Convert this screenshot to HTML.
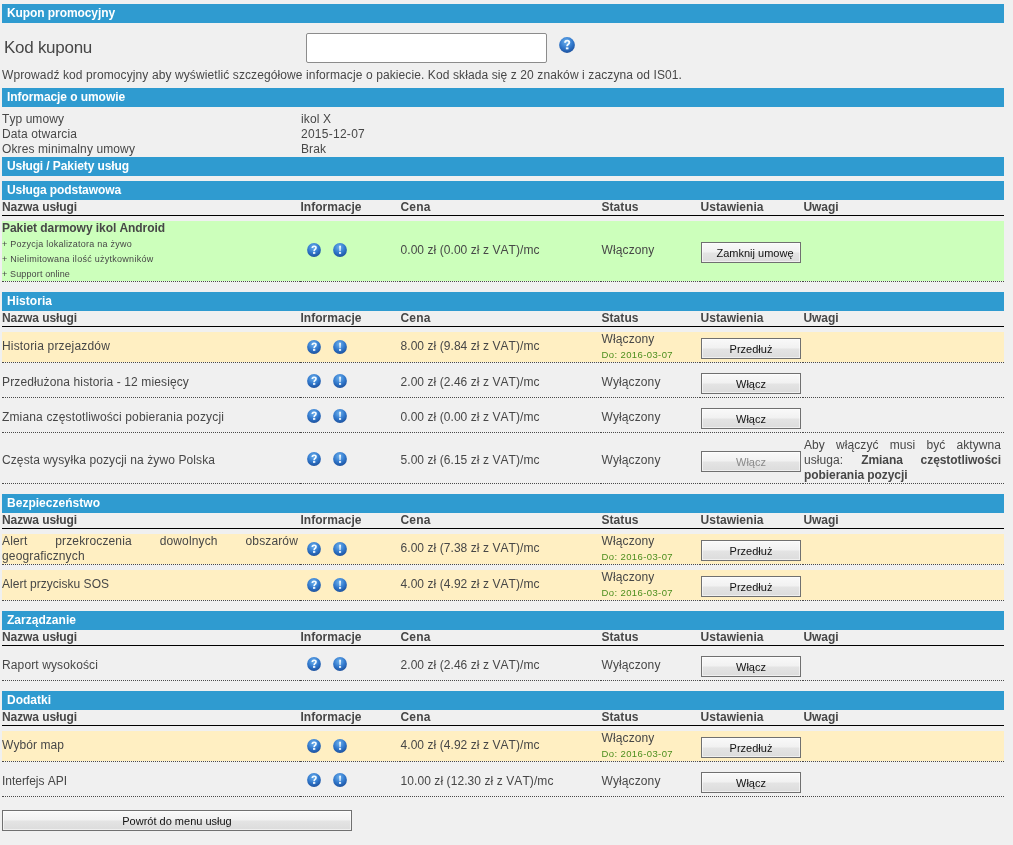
<!DOCTYPE html>
<html><head><meta charset="utf-8"><style>
html,body{margin:0;padding:0;}
body{font-kerning:none;width:1013px;height:845px;background:#f0f0f0;position:relative;overflow:hidden;font-family:"Liberation Sans",sans-serif;font-size:12px;color:#474747;}
div{position:absolute;white-space:nowrap;}
#w{left:0;top:0;width:1013px;height:845px;will-change:transform;}
.bar{left:2px;width:997px;height:19px;line-height:19px;padding-left:5px;background:#2f9bd0;color:#fff;font-weight:bold;}
.t{line-height:15px;}
.th{line-height:15px;font-weight:bold;}
.sm{line-height:15px;font-size:9px;}
.do{line-height:15px;font-size:9.5px;color:#4c8e1e;}
.big{font-size:17px;line-height:20px;}
.just{white-space:normal;text-align:justify;}
.hline{left:2px;width:1002px;height:1px;background:#000;}
.rowbg{left:2px;width:1002px;}
.dot{height:0;border-top:1px dotted #4a4a4a;}
.btn{height:18px;padding-top:1px;line-height:19px;border:1px solid #707070;text-align:center;color:#111;font-size:11px;background:linear-gradient(#f9f9f9 0%,#f1f1f1 48%,#e4e4e4 52%,#dcdcdc 100%);box-shadow:inset 0 0 0 1px rgba(255,255,255,0.55);}
.btn.dis{color:#8a8a8a;}
.inp{border:1px solid #8c8c8c;border-radius:2px;background:#fff;}
.ic{width:14px;height:14px;}
.big16{width:16px;height:16px;}
</style></head><body>
<div id="w">
<div class="bar" style="top:4px;letter-spacing:-0.083px;">Kupon promocyjny</div>
<div class="big" style="left:4px;top:38px;letter-spacing:-0.274px;">Kod kuponu</div>
<div class="inp" style="left:306px;top:33px;width:239px;height:28px"></div>
<div class="ic q big16" style="left:559px;top:37px"><svg width="100%" height="100%" viewBox="0 0 14 14"><defs><radialGradient id="g1" cx="0.45" cy="0.3" r="0.75"><stop offset="0" stop-color="#6eb2ee"/><stop offset="0.55" stop-color="#3178cc"/><stop offset="1" stop-color="#1a4c98"/></radialGradient></defs><circle cx="7" cy="7" r="6.9" fill="url(#g1)"/><path d="M5.3 5.1 Q5.3 3.2 7.2 3.2 Q9 3.2 9 4.8 Q9 5.9 7.9 6.5 Q7.1 7 7.1 8.2" fill="none" stroke="#f4fbff" stroke-width="1.65"/><rect x="6.0" y="9.1" width="2.3" height="1.7" fill="#f4fbff"/></svg></div>
<div class="t" style="left:2px;top:68px;letter-spacing:0.104px;">Wprowadź kod promocyjny aby wyświetlić szczegółowe informacje o pakiecie. Kod składa się z 20 znaków i zaczyna od IS01.</div>
<div class="bar" style="top:88px;letter-spacing:-0.071px;">Informacje o umowie</div>
<div class="t" style="left:2px;top:112px;letter-spacing:0.072px;">Typ umowy</div>
<div class="t" style="left:301px;top:112px;letter-spacing:0.109px;">ikol X</div>
<div class="t" style="left:2px;top:127px;letter-spacing:0.126px;">Data otwarcia</div>
<div class="t" style="left:301px;top:127px;letter-spacing:0.262px;">2015-12-07</div>
<div class="t" style="left:2px;top:142px;letter-spacing:0.110px;">Okres minimalny umowy</div>
<div class="t" style="left:301px;top:142px;letter-spacing:0.082px;">Brak</div>
<div class="bar" style="top:157px;letter-spacing:-0.092px;">Usługi / Pakiety usług</div>
<div class="bar" style="top:181px;letter-spacing:-0.079px;">Usługa podstawowa</div>
<div class="th" style="left:2px;top:200px;letter-spacing:-0.084px;">Nazwa usługi</div>
<div class="th" style="left:300.5px;top:200px;letter-spacing:0.031px;">Informacje</div>
<div class="th" style="left:400.5px;top:200px;letter-spacing:0.164px;">Cena</div>
<div class="th" style="left:601.5px;top:200px;letter-spacing:0.054px;">Status</div>
<div class="th" style="left:700.5px;top:200px;letter-spacing:0.031px;">Ustawienia</div>
<div class="th" style="left:803.5px;top:200px;letter-spacing:-0.068px;">Uwagi</div>
<div class="hline" style="top:215px"></div>
<div class="rowbg" style="top:221px;height:60px;background:#ccffbb"></div>
<div class="dot" style="top:281px;left:2px;width:298px"></div>
<div class="dot" style="top:281px;left:300px;width:100px"></div>
<div class="dot" style="top:281px;left:400px;width:201px"></div>
<div class="dot" style="top:281px;left:601px;width:99px"></div>
<div class="dot" style="top:281px;left:700px;width:103px"></div>
<div class="dot" style="top:281px;left:803px;width:201px"></div>
<div class="th" style="left:2px;top:221px;letter-spacing:-0.063px;">Pakiet darmowy ikol Android</div>
<div class="sm" style="left:2px;top:237px;letter-spacing:0.240px;">+ Pozycja lokalizatora na żywo</div>
<div class="sm" style="left:2px;top:252px;letter-spacing:0.270px;">+ Nielimitowana ilość użytkowników</div>
<div class="sm" style="left:2px;top:267px;letter-spacing:0.138px;">+ Support online</div>
<div class="ic q" style="left:307px;top:243px"><svg width="100%" height="100%" viewBox="0 0 14 14"><defs><radialGradient id="g1" cx="0.45" cy="0.3" r="0.75"><stop offset="0" stop-color="#6eb2ee"/><stop offset="0.55" stop-color="#3178cc"/><stop offset="1" stop-color="#1a4c98"/></radialGradient></defs><circle cx="7" cy="7" r="6.9" fill="url(#g1)"/><path d="M5.3 5.1 Q5.3 3.2 7.2 3.2 Q9 3.2 9 4.8 Q9 5.9 7.9 6.5 Q7.1 7 7.1 8.2" fill="none" stroke="#f4fbff" stroke-width="1.65"/><rect x="6.0" y="9.1" width="2.3" height="1.7" fill="#f4fbff"/></svg></div>
<div class="ic e" style="left:333px;top:243px"><svg width="100%" height="100%" viewBox="0 0 14 14"><circle cx="7" cy="7" r="6.9" fill="url(#g1)"/><path d="M6.15 2.8 L7.95 2.8 L7.55 8.3 L6.55 8.3 Z" fill="#f4fbff"/><rect x="6.0" y="9.1" width="2.1" height="1.7" fill="#f4fbff"/></svg></div>
<div class="t" style="left:400.5px;top:243px;letter-spacing:0.063px;">0.00 zł (0.00 zł z VAT)/mc</div>
<div class="t" style="left:601.5px;top:243px;letter-spacing:0.123px;">Włączony</div>
<div class="btn" style="left:701px;top:242px;width:98px"><span style="position:relative;left:4px">Zamknij umowę</span></div>
<div class="bar" style="top:292px;letter-spacing:0.040px;">Historia</div>
<div class="th" style="left:2px;top:311px;letter-spacing:-0.084px;">Nazwa usługi</div>
<div class="th" style="left:300.5px;top:311px;letter-spacing:0.031px;">Informacje</div>
<div class="th" style="left:400.5px;top:311px;letter-spacing:0.164px;">Cena</div>
<div class="th" style="left:601.5px;top:311px;letter-spacing:0.054px;">Status</div>
<div class="th" style="left:700.5px;top:311px;letter-spacing:0.031px;">Ustawienia</div>
<div class="th" style="left:803.5px;top:311px;letter-spacing:-0.068px;">Uwagi</div>
<div class="hline" style="top:326px"></div>
<div class="rowbg" style="top:332px;height:30px;background:#ffefc2"></div>
<div class="dot" style="top:362px;left:2px;width:298px"></div>
<div class="dot" style="top:362px;left:300px;width:100px"></div>
<div class="dot" style="top:362px;left:400px;width:201px"></div>
<div class="dot" style="top:362px;left:601px;width:99px"></div>
<div class="dot" style="top:362px;left:700px;width:103px"></div>
<div class="dot" style="top:362px;left:803px;width:201px"></div>
<div class="t" style="left:2px;top:339px;letter-spacing:0.173px;">Historia przejazdów</div>
<div class="ic q" style="left:307px;top:339.5px"><svg width="100%" height="100%" viewBox="0 0 14 14"><defs><radialGradient id="g1" cx="0.45" cy="0.3" r="0.75"><stop offset="0" stop-color="#6eb2ee"/><stop offset="0.55" stop-color="#3178cc"/><stop offset="1" stop-color="#1a4c98"/></radialGradient></defs><circle cx="7" cy="7" r="6.9" fill="url(#g1)"/><path d="M5.3 5.1 Q5.3 3.2 7.2 3.2 Q9 3.2 9 4.8 Q9 5.9 7.9 6.5 Q7.1 7 7.1 8.2" fill="none" stroke="#f4fbff" stroke-width="1.65"/><rect x="6.0" y="9.1" width="2.3" height="1.7" fill="#f4fbff"/></svg></div>
<div class="ic e" style="left:333px;top:339.5px"><svg width="100%" height="100%" viewBox="0 0 14 14"><circle cx="7" cy="7" r="6.9" fill="url(#g1)"/><path d="M6.15 2.8 L7.95 2.8 L7.55 8.3 L6.55 8.3 Z" fill="#f4fbff"/><rect x="6.0" y="9.1" width="2.1" height="1.7" fill="#f4fbff"/></svg></div>
<div class="t" style="left:400.5px;top:339px;letter-spacing:0.063px;">8.00 zł (9.84 zł z VAT)/mc</div>
<div class="t" style="left:601.5px;top:332px;letter-spacing:0.123px;">Włączony</div>
<div class="do" style="left:601.5px;top:347px;letter-spacing:0.393px;">Do: 2016-03-07</div>
<div class="btn" style="left:701px;top:338px;width:98px">Przedłuż</div>
<div class="dot" style="top:397px;left:2px;width:298px"></div>
<div class="dot" style="top:397px;left:300px;width:100px"></div>
<div class="dot" style="top:397px;left:400px;width:201px"></div>
<div class="dot" style="top:397px;left:601px;width:99px"></div>
<div class="dot" style="top:397px;left:700px;width:103px"></div>
<div class="dot" style="top:397px;left:803px;width:201px"></div>
<div class="t" style="left:2px;top:375px;letter-spacing:0.125px;">Przedłużona historia - 12 miesięcy</div>
<div class="ic q" style="left:307px;top:374px"><svg width="100%" height="100%" viewBox="0 0 14 14"><defs><radialGradient id="g1" cx="0.45" cy="0.3" r="0.75"><stop offset="0" stop-color="#6eb2ee"/><stop offset="0.55" stop-color="#3178cc"/><stop offset="1" stop-color="#1a4c98"/></radialGradient></defs><circle cx="7" cy="7" r="6.9" fill="url(#g1)"/><path d="M5.3 5.1 Q5.3 3.2 7.2 3.2 Q9 3.2 9 4.8 Q9 5.9 7.9 6.5 Q7.1 7 7.1 8.2" fill="none" stroke="#f4fbff" stroke-width="1.65"/><rect x="6.0" y="9.1" width="2.3" height="1.7" fill="#f4fbff"/></svg></div>
<div class="ic e" style="left:333px;top:374px"><svg width="100%" height="100%" viewBox="0 0 14 14"><circle cx="7" cy="7" r="6.9" fill="url(#g1)"/><path d="M6.15 2.8 L7.95 2.8 L7.55 8.3 L6.55 8.3 Z" fill="#f4fbff"/><rect x="6.0" y="9.1" width="2.1" height="1.7" fill="#f4fbff"/></svg></div>
<div class="t" style="left:400.5px;top:375px;letter-spacing:0.063px;">2.00 zł (2.46 zł z VAT)/mc</div>
<div class="t" style="left:601.5px;top:375px;letter-spacing:0.110px;">Wyłączony</div>
<div class="btn" style="left:701px;top:373px;width:98px">Włącz</div>
<div class="dot" style="top:432px;left:2px;width:298px"></div>
<div class="dot" style="top:432px;left:300px;width:100px"></div>
<div class="dot" style="top:432px;left:400px;width:201px"></div>
<div class="dot" style="top:432px;left:601px;width:99px"></div>
<div class="dot" style="top:432px;left:700px;width:103px"></div>
<div class="dot" style="top:432px;left:803px;width:201px"></div>
<div class="t" style="left:2px;top:410px;letter-spacing:0.148px;">Zmiana częstotliwości pobierania pozycji</div>
<div class="ic q" style="left:307px;top:409px"><svg width="100%" height="100%" viewBox="0 0 14 14"><defs><radialGradient id="g1" cx="0.45" cy="0.3" r="0.75"><stop offset="0" stop-color="#6eb2ee"/><stop offset="0.55" stop-color="#3178cc"/><stop offset="1" stop-color="#1a4c98"/></radialGradient></defs><circle cx="7" cy="7" r="6.9" fill="url(#g1)"/><path d="M5.3 5.1 Q5.3 3.2 7.2 3.2 Q9 3.2 9 4.8 Q9 5.9 7.9 6.5 Q7.1 7 7.1 8.2" fill="none" stroke="#f4fbff" stroke-width="1.65"/><rect x="6.0" y="9.1" width="2.3" height="1.7" fill="#f4fbff"/></svg></div>
<div class="ic e" style="left:333px;top:409px"><svg width="100%" height="100%" viewBox="0 0 14 14"><circle cx="7" cy="7" r="6.9" fill="url(#g1)"/><path d="M6.15 2.8 L7.95 2.8 L7.55 8.3 L6.55 8.3 Z" fill="#f4fbff"/><rect x="6.0" y="9.1" width="2.1" height="1.7" fill="#f4fbff"/></svg></div>
<div class="t" style="left:400.5px;top:410px;letter-spacing:0.063px;">0.00 zł (0.00 zł z VAT)/mc</div>
<div class="t" style="left:601.5px;top:410px;letter-spacing:0.110px;">Wyłączony</div>
<div class="btn" style="left:701px;top:408px;width:98px">Włącz</div>
<div class="dot" style="top:483px;left:2px;width:298px"></div>
<div class="dot" style="top:483px;left:300px;width:100px"></div>
<div class="dot" style="top:483px;left:400px;width:201px"></div>
<div class="dot" style="top:483px;left:601px;width:99px"></div>
<div class="dot" style="top:483px;left:700px;width:103px"></div>
<div class="dot" style="top:483px;left:803px;width:201px"></div>
<div class="t" style="left:2px;top:453px;letter-spacing:0.097px;">Częsta wysyłka pozycji na żywo Polska</div>
<div class="ic q" style="left:307px;top:452px"><svg width="100%" height="100%" viewBox="0 0 14 14"><defs><radialGradient id="g1" cx="0.45" cy="0.3" r="0.75"><stop offset="0" stop-color="#6eb2ee"/><stop offset="0.55" stop-color="#3178cc"/><stop offset="1" stop-color="#1a4c98"/></radialGradient></defs><circle cx="7" cy="7" r="6.9" fill="url(#g1)"/><path d="M5.3 5.1 Q5.3 3.2 7.2 3.2 Q9 3.2 9 4.8 Q9 5.9 7.9 6.5 Q7.1 7 7.1 8.2" fill="none" stroke="#f4fbff" stroke-width="1.65"/><rect x="6.0" y="9.1" width="2.3" height="1.7" fill="#f4fbff"/></svg></div>
<div class="ic e" style="left:333px;top:452px"><svg width="100%" height="100%" viewBox="0 0 14 14"><circle cx="7" cy="7" r="6.9" fill="url(#g1)"/><path d="M6.15 2.8 L7.95 2.8 L7.55 8.3 L6.55 8.3 Z" fill="#f4fbff"/><rect x="6.0" y="9.1" width="2.1" height="1.7" fill="#f4fbff"/></svg></div>
<div class="t" style="left:400.5px;top:453px;letter-spacing:0.063px;">5.00 zł (6.15 zł z VAT)/mc</div>
<div class="t" style="left:601.5px;top:453px;letter-spacing:0.110px;">Wyłączony</div>
<div class="btn dis" style="left:701px;top:451px;width:98px">Włącz</div>
<div class="t just" style="left:804px;top:438px;width:197px;"><span style="letter-spacing:0.070px;">Aby włączyć musi być aktywna usługa: </span><b style="letter-spacing:-0.068px;">Zmiana częstotliwości pobierania pozycji</b></div>
<div class="bar" style="top:494px;letter-spacing:0.022px;">Bezpieczeństwo</div>
<div class="th" style="left:2px;top:513px;letter-spacing:-0.084px;">Nazwa usługi</div>
<div class="th" style="left:300.5px;top:513px;letter-spacing:0.031px;">Informacje</div>
<div class="th" style="left:400.5px;top:513px;letter-spacing:0.164px;">Cena</div>
<div class="th" style="left:601.5px;top:513px;letter-spacing:0.054px;">Status</div>
<div class="th" style="left:700.5px;top:513px;letter-spacing:0.031px;">Ustawienia</div>
<div class="th" style="left:803.5px;top:513px;letter-spacing:-0.068px;">Uwagi</div>
<div class="hline" style="top:528px"></div>
<div class="rowbg" style="top:534px;height:30px;background:#ffefc2"></div>
<div class="dot" style="top:564px;left:2px;width:298px"></div>
<div class="dot" style="top:564px;left:300px;width:100px"></div>
<div class="dot" style="top:564px;left:400px;width:201px"></div>
<div class="dot" style="top:564px;left:601px;width:99px"></div>
<div class="dot" style="top:564px;left:700px;width:103px"></div>
<div class="dot" style="top:564px;left:803px;width:201px"></div>
<div class="t just" style="left:2px;top:534px;width:296px;letter-spacing:0.142px;">Alert przekroczenia dowolnych obszarów geograficznych</div>
<div class="ic q" style="left:307px;top:541.5px"><svg width="100%" height="100%" viewBox="0 0 14 14"><defs><radialGradient id="g1" cx="0.45" cy="0.3" r="0.75"><stop offset="0" stop-color="#6eb2ee"/><stop offset="0.55" stop-color="#3178cc"/><stop offset="1" stop-color="#1a4c98"/></radialGradient></defs><circle cx="7" cy="7" r="6.9" fill="url(#g1)"/><path d="M5.3 5.1 Q5.3 3.2 7.2 3.2 Q9 3.2 9 4.8 Q9 5.9 7.9 6.5 Q7.1 7 7.1 8.2" fill="none" stroke="#f4fbff" stroke-width="1.65"/><rect x="6.0" y="9.1" width="2.3" height="1.7" fill="#f4fbff"/></svg></div>
<div class="ic e" style="left:333px;top:541.5px"><svg width="100%" height="100%" viewBox="0 0 14 14"><circle cx="7" cy="7" r="6.9" fill="url(#g1)"/><path d="M6.15 2.8 L7.95 2.8 L7.55 8.3 L6.55 8.3 Z" fill="#f4fbff"/><rect x="6.0" y="9.1" width="2.1" height="1.7" fill="#f4fbff"/></svg></div>
<div class="t" style="left:400.5px;top:541px;letter-spacing:0.063px;">6.00 zł (7.38 zł z VAT)/mc</div>
<div class="t" style="left:601.5px;top:534px;letter-spacing:0.123px;">Włączony</div>
<div class="do" style="left:601.5px;top:549px;letter-spacing:0.393px;">Do: 2016-03-07</div>
<div class="btn" style="left:701px;top:540px;width:98px">Przedłuż</div>
<div class="rowbg" style="top:570px;height:30px;background:#ffefc2"></div>
<div class="dot" style="top:600px;left:2px;width:298px"></div>
<div class="dot" style="top:600px;left:300px;width:100px"></div>
<div class="dot" style="top:600px;left:400px;width:201px"></div>
<div class="dot" style="top:600px;left:601px;width:99px"></div>
<div class="dot" style="top:600px;left:700px;width:103px"></div>
<div class="dot" style="top:600px;left:803px;width:201px"></div>
<div class="t" style="left:2px;top:577px;letter-spacing:0.016px;">Alert przycisku SOS</div>
<div class="ic q" style="left:307px;top:577.5px"><svg width="100%" height="100%" viewBox="0 0 14 14"><defs><radialGradient id="g1" cx="0.45" cy="0.3" r="0.75"><stop offset="0" stop-color="#6eb2ee"/><stop offset="0.55" stop-color="#3178cc"/><stop offset="1" stop-color="#1a4c98"/></radialGradient></defs><circle cx="7" cy="7" r="6.9" fill="url(#g1)"/><path d="M5.3 5.1 Q5.3 3.2 7.2 3.2 Q9 3.2 9 4.8 Q9 5.9 7.9 6.5 Q7.1 7 7.1 8.2" fill="none" stroke="#f4fbff" stroke-width="1.65"/><rect x="6.0" y="9.1" width="2.3" height="1.7" fill="#f4fbff"/></svg></div>
<div class="ic e" style="left:333px;top:577.5px"><svg width="100%" height="100%" viewBox="0 0 14 14"><circle cx="7" cy="7" r="6.9" fill="url(#g1)"/><path d="M6.15 2.8 L7.95 2.8 L7.55 8.3 L6.55 8.3 Z" fill="#f4fbff"/><rect x="6.0" y="9.1" width="2.1" height="1.7" fill="#f4fbff"/></svg></div>
<div class="t" style="left:400.5px;top:577px;letter-spacing:0.063px;">4.00 zł (4.92 zł z VAT)/mc</div>
<div class="t" style="left:601.5px;top:570px;letter-spacing:0.123px;">Włączony</div>
<div class="do" style="left:601.5px;top:585px;letter-spacing:0.393px;">Do: 2016-03-07</div>
<div class="btn" style="left:701px;top:576px;width:98px">Przedłuż</div>
<div class="bar" style="top:611px;letter-spacing:0.028px;">Zarządzanie</div>
<div class="th" style="left:2px;top:630px;letter-spacing:-0.084px;">Nazwa usługi</div>
<div class="th" style="left:300.5px;top:630px;letter-spacing:0.031px;">Informacje</div>
<div class="th" style="left:400.5px;top:630px;letter-spacing:0.164px;">Cena</div>
<div class="th" style="left:601.5px;top:630px;letter-spacing:0.054px;">Status</div>
<div class="th" style="left:700.5px;top:630px;letter-spacing:0.031px;">Ustawienia</div>
<div class="th" style="left:803.5px;top:630px;letter-spacing:-0.068px;">Uwagi</div>
<div class="hline" style="top:645px"></div>
<div class="dot" style="top:680px;left:2px;width:298px"></div>
<div class="dot" style="top:680px;left:300px;width:100px"></div>
<div class="dot" style="top:680px;left:400px;width:201px"></div>
<div class="dot" style="top:680px;left:601px;width:99px"></div>
<div class="dot" style="top:680px;left:700px;width:103px"></div>
<div class="dot" style="top:680px;left:803px;width:201px"></div>
<div class="t" style="left:2px;top:658px;letter-spacing:0.123px;">Raport wysokości</div>
<div class="ic q" style="left:307px;top:657px"><svg width="100%" height="100%" viewBox="0 0 14 14"><defs><radialGradient id="g1" cx="0.45" cy="0.3" r="0.75"><stop offset="0" stop-color="#6eb2ee"/><stop offset="0.55" stop-color="#3178cc"/><stop offset="1" stop-color="#1a4c98"/></radialGradient></defs><circle cx="7" cy="7" r="6.9" fill="url(#g1)"/><path d="M5.3 5.1 Q5.3 3.2 7.2 3.2 Q9 3.2 9 4.8 Q9 5.9 7.9 6.5 Q7.1 7 7.1 8.2" fill="none" stroke="#f4fbff" stroke-width="1.65"/><rect x="6.0" y="9.1" width="2.3" height="1.7" fill="#f4fbff"/></svg></div>
<div class="ic e" style="left:333px;top:657px"><svg width="100%" height="100%" viewBox="0 0 14 14"><circle cx="7" cy="7" r="6.9" fill="url(#g1)"/><path d="M6.15 2.8 L7.95 2.8 L7.55 8.3 L6.55 8.3 Z" fill="#f4fbff"/><rect x="6.0" y="9.1" width="2.1" height="1.7" fill="#f4fbff"/></svg></div>
<div class="t" style="left:400.5px;top:658px;letter-spacing:0.063px;">2.00 zł (2.46 zł z VAT)/mc</div>
<div class="t" style="left:601.5px;top:658px;letter-spacing:0.110px;">Wyłączony</div>
<div class="btn" style="left:701px;top:656px;width:98px">Włącz</div>
<div class="bar" style="top:691px;letter-spacing:-0.001px;">Dodatki</div>
<div class="th" style="left:2px;top:710px;letter-spacing:-0.084px;">Nazwa usługi</div>
<div class="th" style="left:300.5px;top:710px;letter-spacing:0.031px;">Informacje</div>
<div class="th" style="left:400.5px;top:710px;letter-spacing:0.164px;">Cena</div>
<div class="th" style="left:601.5px;top:710px;letter-spacing:0.054px;">Status</div>
<div class="th" style="left:700.5px;top:710px;letter-spacing:0.031px;">Ustawienia</div>
<div class="th" style="left:803.5px;top:710px;letter-spacing:-0.068px;">Uwagi</div>
<div class="hline" style="top:725px"></div>
<div class="rowbg" style="top:731px;height:30px;background:#ffefc2"></div>
<div class="dot" style="top:761px;left:2px;width:298px"></div>
<div class="dot" style="top:761px;left:300px;width:100px"></div>
<div class="dot" style="top:761px;left:400px;width:201px"></div>
<div class="dot" style="top:761px;left:601px;width:99px"></div>
<div class="dot" style="top:761px;left:700px;width:103px"></div>
<div class="dot" style="top:761px;left:803px;width:201px"></div>
<div class="t" style="left:2px;top:738px;letter-spacing:0.072px;">Wybór map</div>
<div class="ic q" style="left:307px;top:738.5px"><svg width="100%" height="100%" viewBox="0 0 14 14"><defs><radialGradient id="g1" cx="0.45" cy="0.3" r="0.75"><stop offset="0" stop-color="#6eb2ee"/><stop offset="0.55" stop-color="#3178cc"/><stop offset="1" stop-color="#1a4c98"/></radialGradient></defs><circle cx="7" cy="7" r="6.9" fill="url(#g1)"/><path d="M5.3 5.1 Q5.3 3.2 7.2 3.2 Q9 3.2 9 4.8 Q9 5.9 7.9 6.5 Q7.1 7 7.1 8.2" fill="none" stroke="#f4fbff" stroke-width="1.65"/><rect x="6.0" y="9.1" width="2.3" height="1.7" fill="#f4fbff"/></svg></div>
<div class="ic e" style="left:333px;top:738.5px"><svg width="100%" height="100%" viewBox="0 0 14 14"><circle cx="7" cy="7" r="6.9" fill="url(#g1)"/><path d="M6.15 2.8 L7.95 2.8 L7.55 8.3 L6.55 8.3 Z" fill="#f4fbff"/><rect x="6.0" y="9.1" width="2.1" height="1.7" fill="#f4fbff"/></svg></div>
<div class="t" style="left:400.5px;top:738px;letter-spacing:0.063px;">4.00 zł (4.92 zł z VAT)/mc</div>
<div class="t" style="left:601.5px;top:731px;letter-spacing:0.123px;">Włączony</div>
<div class="do" style="left:601.5px;top:746px;letter-spacing:0.393px;">Do: 2016-03-07</div>
<div class="btn" style="left:701px;top:737px;width:98px">Przedłuż</div>
<div class="dot" style="top:796px;left:2px;width:298px"></div>
<div class="dot" style="top:796px;left:300px;width:100px"></div>
<div class="dot" style="top:796px;left:400px;width:201px"></div>
<div class="dot" style="top:796px;left:601px;width:99px"></div>
<div class="dot" style="top:796px;left:700px;width:103px"></div>
<div class="dot" style="top:796px;left:803px;width:201px"></div>
<div class="t" style="left:2px;top:774px;letter-spacing:-0.028px;">Interfejs API</div>
<div class="ic q" style="left:307px;top:773px"><svg width="100%" height="100%" viewBox="0 0 14 14"><defs><radialGradient id="g1" cx="0.45" cy="0.3" r="0.75"><stop offset="0" stop-color="#6eb2ee"/><stop offset="0.55" stop-color="#3178cc"/><stop offset="1" stop-color="#1a4c98"/></radialGradient></defs><circle cx="7" cy="7" r="6.9" fill="url(#g1)"/><path d="M5.3 5.1 Q5.3 3.2 7.2 3.2 Q9 3.2 9 4.8 Q9 5.9 7.9 6.5 Q7.1 7 7.1 8.2" fill="none" stroke="#f4fbff" stroke-width="1.65"/><rect x="6.0" y="9.1" width="2.3" height="1.7" fill="#f4fbff"/></svg></div>
<div class="ic e" style="left:333px;top:773px"><svg width="100%" height="100%" viewBox="0 0 14 14"><circle cx="7" cy="7" r="6.9" fill="url(#g1)"/><path d="M6.15 2.8 L7.95 2.8 L7.55 8.3 L6.55 8.3 Z" fill="#f4fbff"/><rect x="6.0" y="9.1" width="2.1" height="1.7" fill="#f4fbff"/></svg></div>
<div class="t" style="left:400.5px;top:774px;letter-spacing:0.081px;">10.00 zł (12.30 zł z VAT)/mc</div>
<div class="t" style="left:601.5px;top:774px;letter-spacing:0.110px;">Wyłączony</div>
<div class="btn" style="left:701px;top:772px;width:98px">Włącz</div>
<div class="btn" style="left:2px;top:810px;width:348px">Powrót do menu usług</div>
</div>
</body></html>
